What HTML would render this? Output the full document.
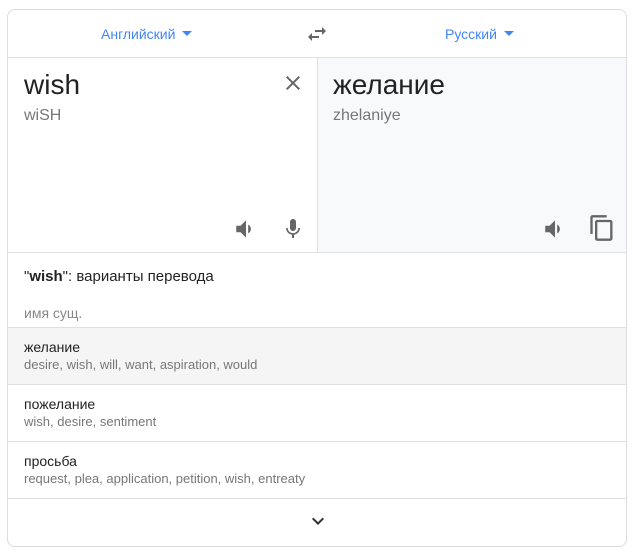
<!DOCTYPE html>
<html><head><meta charset="utf-8"><style>
*{margin:0;padding:0;box-sizing:border-box}
body{width:637px;height:554px;background:#fff;font-family:"Liberation Sans",Arial,sans-serif;position:relative;overflow:hidden}
.card{position:absolute;left:7px;top:9px;width:620px;height:538px;border:1px solid #dadce0;border-radius:8px;overflow:hidden}
.hdr{position:absolute;left:0;top:0;width:100%;height:48px;border-bottom:1px solid #e0e0e0}
.lang{position:absolute;top:16px;font-size:14px;color:#4285f4}
.lang:after{content:"";display:inline-block;border:5px solid transparent;border-top-color:#4285f4;border-bottom:0;margin-left:7px;vertical-align:3px}
.right{position:absolute;left:309px;top:48px;width:311px;height:194px;background:#f8f9fa;border-left:1px solid #e0e0e0}
.big{position:absolute;font-size:28px;color:#222;top:59px}
.tr{position:absolute;font-size:16px;color:#777;top:106px}
.sep{position:absolute;left:0;width:100%;border-top:1px solid #e0e0e0}
.t{position:absolute;left:16px;font-size:14px;color:#222}
.s{position:absolute;left:16px;font-size:14px;color:#777}
svg{position:absolute}
</style></head><body>
<div class="card">
<div class="hdr">
<div class="lang" style="left:93px">Английский</div>
<div class="lang" style="left:437px">Русский</div>
<svg style="left:297px;top:12px" width="24" height="24" viewBox="0 0 24 24"><path fill="#666" d="M6.99 11L3 15l3.99 4v-3H14v-2H6.99v-3zM21 9l-3.99-4v3H10v2h7.01v3L21 9z"/></svg>
</div>
<div class="right"></div>
<div class="big" style="left:16px;top:59px">wish</div>
<div class="tr" style="left:16px;top:97px">wiSH</div>
<div class="big" style="left:325px;top:59px">желание</div>
<div class="tr" style="left:325px;top:97px">zhelaniye</div>
<svg style="left:273px;top:61px" width="24" height="24" viewBox="0 0 24 24"><path fill="#666" d="M19 6.41L17.59 5 12 10.59 6.41 5 5 6.41 10.59 12 5 17.59 6.41 19 12 13.41 17.59 19 19 17.59 13.41 12z"/></svg>
<svg style="left:225px;top:206px" width="26" height="26" viewBox="0 0 24 24"><path fill="#666" d="M3 9v6h4l5 5V4L7 9H3zm13.5 3c0-1.77-1.02-3.29-2.5-4.03v8.05c1.48-.73 2.5-2.25 2.5-4.02z"/></svg>
<svg style="left:273px;top:206px" width="24" height="26" viewBox="0 0 24 24"><path fill="#666" d="M12 14c1.66 0 3-1.34 3-3V5c0-1.66-1.34-3-3-3S9 3.34 9 5v6c0 1.66 1.34 3 3 3zm5.3-3c0 3-2.54 5.1-5.3 5.1S6.7 14 6.7 11H5c0 3.41 2.72 6.23 6 6.72V21h2v-3.28c3.28-.48 6-3.3 6-6.72h-1.7z"/></svg>
<svg style="left:534px;top:206px" width="26" height="26" viewBox="0 0 24 24"><path fill="#666" d="M3 9v6h4l5 5V4L7 9H3zm13.5 3c0-1.77-1.02-3.29-2.5-4.03v8.05c1.48-.73 2.5-2.25 2.5-4.02z"/></svg>
<svg style="left:580px;top:204px" width="28" height="28" viewBox="0 0 24 24"><path fill="#666" d="M16 1H4c-1.1 0-2 .9-2 2v14h2V3h12V1zm3 4H8c-1.1 0-2 .9-2 2v14c0 1.1.9 2 2 2h11c1.1 0 2-.9 2-2V7c0-1.1-.9-2-2-2zm0 16H8V7h11v14z"/></svg>
<div class="sep" style="top:242px"></div>
<div class="t" style="top:258px;font-size:15px">"<b>wish</b>": варианты перевода</div>
<div class="s" style="top:295px;color:#888">имя сущ.</div>
<div class="sep" style="top:317px"></div>
<div style="position:absolute;left:0;top:318px;width:100%;height:56px;background:#f5f5f5"></div>
<div class="t" style="top:329px">желание</div>
<div class="s" style="top:347px;font-size:13px">desire, wish, will, want, aspiration, would</div>
<div class="sep" style="top:374px"></div>
<div class="t" style="top:386px">пожелание</div>
<div class="s" style="top:404px;font-size:13px">wish, desire, sentiment</div>
<div class="sep" style="top:431px"></div>
<div class="t" style="top:443px">просьба</div>
<div class="s" style="top:461px;font-size:13px">request, plea, application, petition, wish, entreaty</div>
<div class="sep" style="top:488px"></div>
<svg style="left:298px;top:499px" width="24" height="24" viewBox="0 0 24 24"><path fill="#333" d="M7.41 8.59L12 13.17l4.59-4.58L18 10l-6 6-6-6z"/></svg>
</div>
</body></html>
